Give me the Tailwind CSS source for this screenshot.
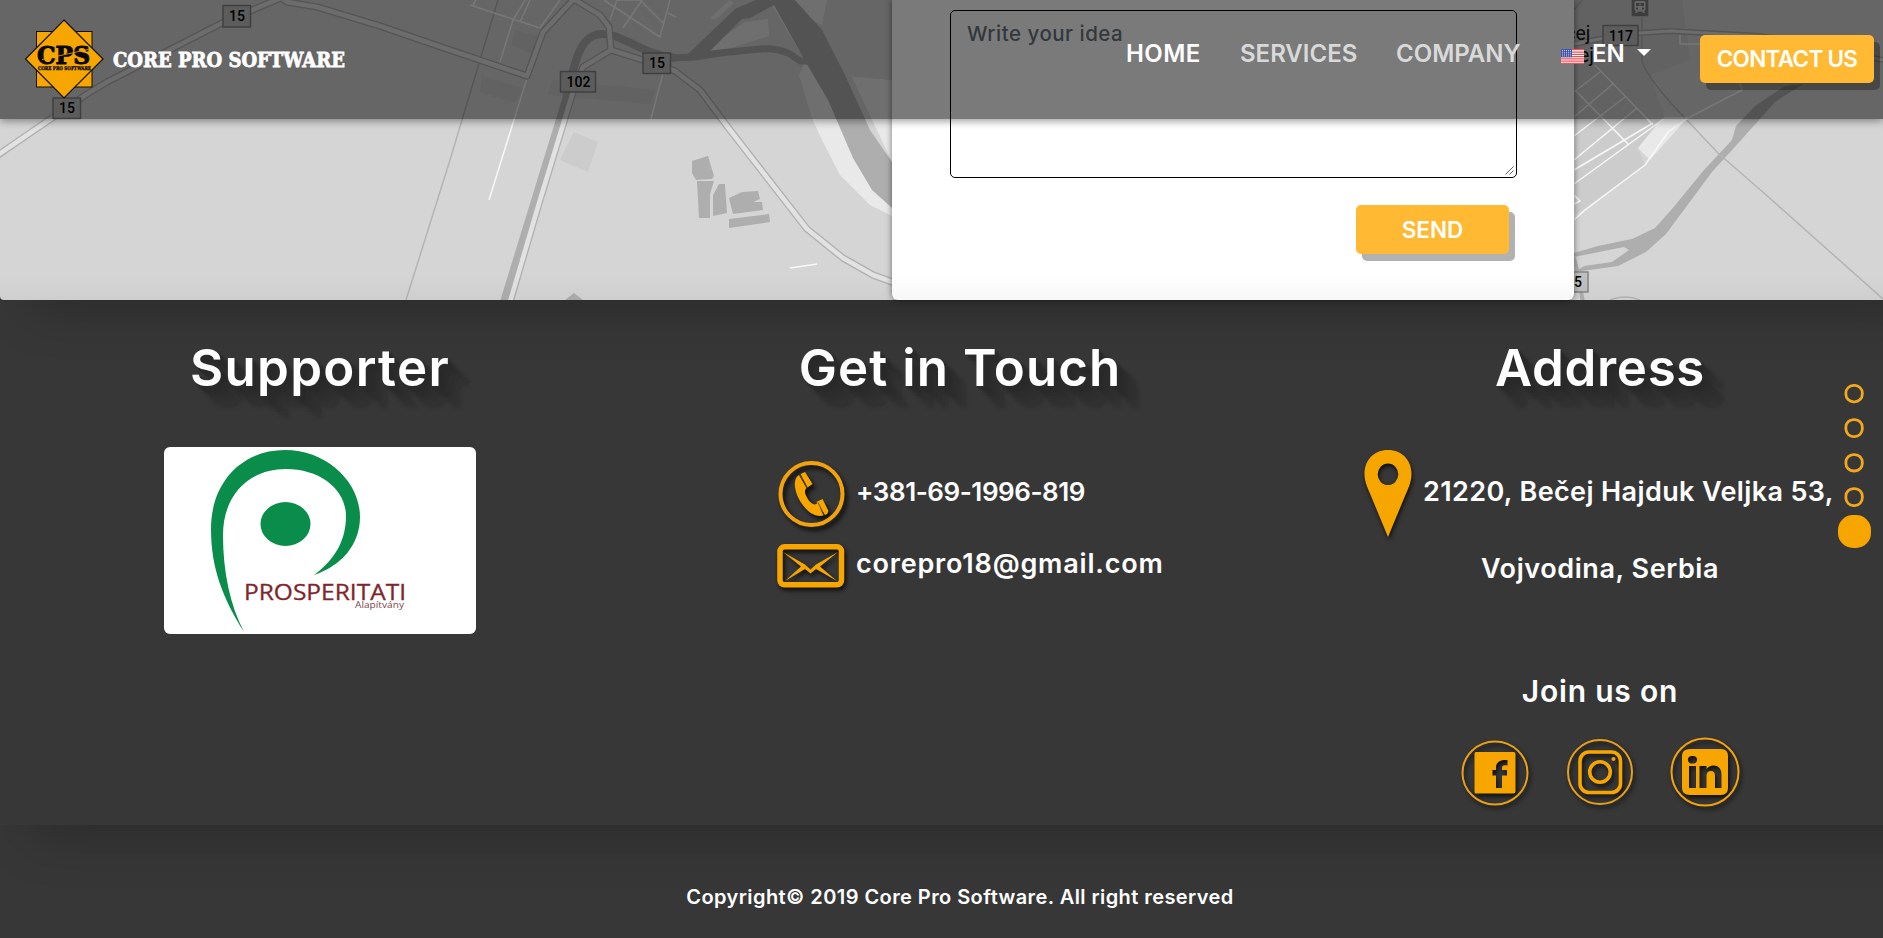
<!DOCTYPE html>
<html lang="en">
<head>
<meta charset="utf-8">
<title>Core Pro Software</title>
<script src="https://cdn.jsdelivr.net/npm/@tailwindcss/browser@4"></script>
</head>
<body class="h-[938px] overflow-hidden bg-[#373737] font-[Inter,sans-serif] font-semibold text-white">

<!-- Header over the map -->
<header class="absolute inset-x-0 top-0 z-20 flex h-[119px] items-start bg-black/52 pr-[9px] shadow-[0_2px_8px_rgba(0,0,0,0.4)]">
  <svg class="h-[119px] w-[360px]" viewBox="0 0 360 119">
    <rect x="36.5" y="31.5" width="55.5" height="55.5" fill="#f7a600" stroke="#111" stroke-width="1"/>
    <path d="M64 20 103 59 64 98 25.500 59Z" fill="#f7a600" stroke="#111" stroke-width="1.200"/>
    <text x="37" y="63.500" textLength="53" lengthAdjust="spacingAndGlyphs" font-family="DejaVu Serif" font-weight="700" font-size="24" fill="#080808" stroke="#080808" stroke-width="1">CPS</text>
    <path d="M42 59.500 88 49.500" stroke="#f7a600" stroke-width=".8"/>
    <text x="38" y="70" textLength="53" lengthAdjust="spacingAndGlyphs" font-family="DejaVu Serif" font-weight="700" font-size="5" fill="#080808" stroke="#080808" stroke-width=".3">CORE PRO SOFTWARE</text>
    <text x="113" y="67" textLength="232" lengthAdjust="spacingAndGlyphs" font-family="DejaVu Serif" font-weight="700" font-size="21" fill="#fff" stroke="#fff" stroke-width=".8">CORE PRO SOFTWARE</text>
  </svg>
  <nav class="ml-auto flex pt-[33px] text-[24px] leading-[41px] whitespace-nowrap text-[#d9d9d9]">
    <a class="w-[114px] tracking-[0.400px] text-white">HOME</a>
    <a class="w-[156px]">SERVICES</a>
    <a class="w-[165px]">COMPANY</a>
    <a class="flex w-[139px] text-white">
      <svg class="mt-[16px] mr-[8px] h-[15px] w-[23px]" viewBox="0 0 23 15">
        <path fill="#fff" d="M0 0h23v15H0z"/>
        <path stroke="#e8535a" stroke-width="1.250" d="M0 .7h23M0 3h23M0 5.300h23M0 7.600h23M0 9.900h23M0 12.200h23M0 14.400h23"/>
        <path fill="#4257a8" d="M0 0h11v8.300H0z"/>
        <path stroke="#d8def5" stroke-width=".8" stroke-dasharray="1 1" d="M1 1.500h9M1 3.300h9M1 5.100h9M1 6.900h9"/>
      </svg>
      EN
      <svg class="mt-[16px] ml-[12px] h-[7px] w-[14px]" viewBox="0 0 14 7"><path fill="#fff" d="M0 0h14L7 7z"/></svg>
    </a>
  </nav>
  <a class="mt-[35px] flex h-[48px] w-[174px] items-center justify-center rounded-[5px] bg-[#ffb932] text-[22.500px] tracking-[-0.700px] whitespace-nowrap shadow-[6px_7px_0_rgba(0,0,0,0.3)]">CONTACT US</a>
</header>

<!-- Map with the contact form card -->
<section class="relative z-10 flex h-[300px] justify-center rounded-bl-[4px] bg-[#d5d5d5] shadow-[30px_10px_50px_rgba(0,0,0,0.23)]">
  <svg class="absolute inset-0 h-[300px] w-[1883px] rounded-bl-[4px]" viewBox="0 0 1883 300" fill="none" stroke-linejoin="round">
    <!-- blocks -->
    <path fill="#cccccc" d="M574 132 598 142 588 172 560 160zM482 76 523 88 515 103 480 92zM552 80 655 90 650 104 548 95zM515 30 545 38 535 55 512 45zM1575 0H1682L1690 60 1650 75 1665 120 1638 148 1645 165 1575 215z"/>
    <path fill="#e9e9e9" d="M803 57 772 5 790 0H827L822 26 850 76 892 80V162L830 30 805 15zM812 118 799 75 805 62 850 118 875 165 892 200V216L870 205 840 175 822 140zM712 45 745 22 768 19 769 36 725 50 710 50zM710 18 730 0 734 3 715 20zM1638 148 1662 118 1688 117 1650 160z"/>
    <path fill="#d5d5d5" d="M827 0H892V80L850 76 822 26z"/>
    <!-- water -->
    <path stroke="#aeaeae" stroke-width="8" d="M504 302 566 100C575 60 580 34 602 34S640 54 675 58"/>
    <path stroke="#aeaeae" stroke-width="7" d="M670 58 695 57 720 53 750 50Q775 46 790 54L800 61H812"/>
    <path fill="#aeaeae" d="M770-2H793L822 30 845 75 870 130 892 162V208L872 190 853 158 828 100 808 66 803 57zM678 54 688 54 735 9 765-4 776 4 750 18 742 19 703 58 688 61z"/>
    <path fill="#aeaeae" d="M692 161 708 156 714 176 712 179 696 180 692 173zM697 181 714 181 710 194 710 218 699 218zM719 184 725 184 727 213 713 216 713 195zM729 198 742 192 758 191 760 199 753 202 762 202 763 210 733 214zM729 219 769 214 770 222 729 228zM565 300 574 293 583 300z"/>
    <path fill="#aeaeae" d="M1574 253 1598 246 1632 239 1655 228 1672 209 1704 170 1732 140 1736 126 1755 106 1785 86 1803 84 1775 102 1742 139 1712 172 1666 234 1646 252 1618 266 1575 272 1584 266 1612 262 1629 250 1624 247 1574 257z"/>
    <!-- rail and field lines -->
    <path stroke="#b4b4b4" stroke-width="1.500" d="M406 300 450 160 498 0M1642 0V58Q1642 65 1646 70 1656 88 1684 117L1718 153 1765 194 1883 299M1610 300Q1625 294 1640 300M1574 10 1582 0"/>
    <path stroke="#f8f8f8" stroke-width="1.500" d="M489 200 527 78M500 62 513 20 525 0M470 5 540 28 560 0M473 5 476 0M520 22 530 0M604 0 660 37 670 0M640 0 663 23M610 20 617 0 642 0 623 28M668 13 676 17M651 119 663 73M790 268 817 264M1574 220 1585 210 1645 165 1669 131 1690 117 1742 90 1738 80M1574 184 1665 118 1688 118M1574 170 1653 123M1574 160 1637 108M1574 136 1625 97M1574 117 1614 83M1574 92 1600 72M1575 90 1628 144M1595 65 1653 125M1574 195 1580 201 1574 204M1680 35V44H1702"/>
    <!-- roads: casing and fill -->
    <g stroke="#b0b0b0" stroke-width="7.200">
      <path d="M-5 157 52 118 87 94 107 82 222 23 283-3M280-3 287 2 317 7 380 26 450 50 527 76 543 32 573 0M572-2 600 15 609 27 611 50 643 60 675 71 700 90 730 130 807 229 843 258 873 275 895 283M611 50 583 67 573 92 540 200 510 302"/>
      <path d="M1574 44 1605 38 1640 33 1670 31 1760 36 1883 60" stroke-width="6"/>
      <path d="M1574 258 1577 270 1583 302" stroke-width="4"/>
    </g>
    <g stroke="#e2e2e2" stroke-width="4.600">
      <path d="M-5 157 52 118 87 94 107 82 222 23 283-3M280-3 287 2 317 7 380 26 450 50 527 76 543 32 573 0M572-2 600 15 609 27 611 50 643 60 675 71 700 90 730 130 807 229 843 258 873 275 895 283M611 50 583 67 573 92 540 200 510 302"/>
      <path d="M1574 44 1605 38 1640 33 1670 31 1760 36 1883 60" stroke-width="3"/>
    </g>
    <!-- road numbers -->
    <g fill="#c0c0c0" stroke="#858585" stroke-width="1.500">
      <path d="M223 5.500h27.500v21.500H223zM53 98h27.500v20.500H53zM560.500 71.500h35v20.500h-35zM643 53h27.500v20.500H643zM1603 25.500h35v20h-35zM1560 272h28v20h-28z"/>
    </g>
    <rect x="1631.500" y="-4" width="17" height="20.500" rx="1.500" fill="#7e7e7e" stroke="#b8b8b8"/>
    <path fill="#d5d5d5" fill-rule="evenodd" d="M1636 1h8q1.500 0 1.500 1.500v7.500l-1.500 1 1 2h-2l-1-1.500h-4l-1 1.500h-2l1-2-1.500-1V2.500Q1634.500 1 1636 1zM1636 3v3h3.500V3zM1640.500 3v3h3.500V3zM1636 7.500v2h2v-2zM1642 7.500v2h2v-2z"/>
    <g fill="#000" font-family="Roboto" font-size="14" font-weight="500" text-anchor="middle">
      <text x="237" y="20.500">15</text><text x="67" y="113">15</text><text x="578.500" y="86.500">102</text><text x="657" y="68">15</text><text x="1621" y="40.500">117</text><text x="1578" y="286.500">5</text>
    </g>
    <g fill="#111" font-family="Roboto" font-size="19.500" font-weight="400" text-anchor="end">
      <text x="1590.500" y="39.500">čej</text><text x="1594" y="61.500">ej</text>
    </g>
  </svg>

  <form class="relative ml-[583px] h-[300px] w-[682px] rounded-b-[6px] bg-white pt-[10px] pl-[58px] shadow-[0_0_6px_rgba(0,0,0,0.5)]">
    <div class="relative h-[168px] w-[567px] rounded-[5px] border border-black px-[16px] pt-[8px] text-[20.500px] leading-[30px] font-medium tracking-[0.500px] text-[#6c757d]">Write your idea
      <svg class="absolute right-[2px] bottom-[2px] h-[9px] w-[9px]" viewBox="0 0 9 9"><path stroke="#555" stroke-width=".9" d="M.5 8.500 8.500.5M4.500 8.500l4-4"/></svg>
    </div>
    <div class="mt-[27px] ml-[406px] flex h-[49px] w-[153px] items-center justify-center rounded-[5px] bg-[#ffb932] text-[22.500px] tracking-[0px] shadow-[6px_7px_0_rgba(0,0,0,0.3)]">SEND</div>
  </form>
  <div class="absolute inset-x-0 bottom-0 h-[25px] bg-linear-to-b from-transparent to-black/3"></div>
</section>

<!-- Footer -->
<footer class="w-[1920px]">
  <div class="relative grid h-[525px] grid-cols-3 bg-[#373737] shadow-[30px_10px_50px_rgba(0,0,0,0.23)]">
    <div class="flex flex-col items-center pt-[38px]">
      <h2 class="text-[51px] leading-[59px] tracking-[1.300px] [text-shadow:2px_2px_2px_#2a2a2a,4px_4px_2px_#2a2a2a,7px_7px_3px_#2b2b2b,10px_10px_3px_#2d2d2d,13px_13px_3px_#2f2f2f,16px_16px_3px_#303030,19px_19px_3px_#323232,22px_22px_3px_#323232]">Supporter</h2>
      <svg class="mt-[50px] h-[187px] w-[312px] rounded-[6px] bg-white" viewBox="0 0 312 187">
        <g fill="#0a8c4a">
          <path d="M80 185C58 150 47 120 47 82C47 35 78 3 121 3C163 3 196 35 196 70C196 98 177 119 150 128C172 112 182 92 182 69C182 43 157 22 122 22C85 22 59 48 59 88C59 125 66 158 80 185Z"/>
          <ellipse cx="121.500" cy="77" rx="25" ry="22"/>
        </g>
        <text x="80" y="153" textLength="162" lengthAdjust="spacingAndGlyphs" font-family="Open Sans" font-weight="400" font-size="21" fill="#80252d" stroke="#80252d" stroke-width=".3">PROSPERITATI</text>
        <text x="191" y="161" textLength="49" lengthAdjust="spacingAndGlyphs" font-family="Open Sans" font-weight="400" font-size="9" fill="#80454b">Alapítvány</text>
      </svg>
    </div>

    <div class="pt-[38px]">
      <h2 class="text-center text-[51px] leading-[59px] tracking-[1.100px] [text-shadow:2px_2px_2px_#2a2a2a,4px_4px_2px_#2a2a2a,7px_7px_3px_#2b2b2b,10px_10px_3px_#2d2d2d,13px_13px_3px_#2f2f2f,16px_16px_3px_#303030,19px_19px_3px_#323232,22px_22px_3px_#323232]">Get in Touch</h2>
      <div class="mt-[64px] flex items-center gap-[12px] pl-[137px]">
        <svg class="h-[66px] w-[67px] overflow-visible drop-shadow-[3px_4px_2px_rgba(0,0,0,0.75)]" viewBox="0 0 67 66">
          <circle cx="34.500" cy="33" r="31" fill="none" stroke="#f2a20c" stroke-width="4"/>
          <g fill="#f7a600">
            <path d="M23.500 13 28 11 35.500 23 30.500 26.500z"/>
            <path d="M22 14 29.500 27C27.500 29 27.500 32 29.500 35.500C31.500 39.500 34 43 38 43.500L41 42 46.500 54.500C39 56.500 32 52 26.500 45C21 37.500 17 28.500 18 21Q18.500 16 22 14z"/>
            <path d="M39.500 41 45.500 38 51.500 50Q51 53 48 54z"/>
          </g>
          <path d="M22.500 13.500 30.500 27M41 41.500 47.500 54.500" stroke="#5a400a" stroke-width=".8"/>
        </svg>
        <span class="pb-[5px] text-[26px] leading-[40px] tracking-[-0.450px]">+381-69-1996-819</span>
      </div>
      <div class="mt-[17px] flex items-center gap-[12px] pl-[137px]">
        <svg class="h-[44px] w-[67px] overflow-visible drop-shadow-[2px_3px_2px_rgba(0,0,0,0.75)]" viewBox="0 0 67 44">
          <rect x="3" y="2.800" width="61.500" height="38" rx="4.500" fill="none" stroke="#f7a600" stroke-width="5.500"/>
          <path fill="#f7a600" d="M6 8 28 20.500 33.500 25.500 39 20.500 61 8 43 22.500 60 37 39 25 33.500 29.500 28 25 8 37 24 22.500z"/>
        </svg>
        <span class="pb-[5px] text-[27px] leading-[34px] tracking-[0.800px]">corepro18@gmail.com</span>
      </div>
    </div>

    <div class="flex flex-col items-center pt-[38px]">
      <h2 class="text-[51px] leading-[59px] tracking-[0.700px] [text-shadow:2px_2px_2px_#2a2a2a,4px_4px_2px_#2a2a2a,7px_7px_3px_#2b2b2b,10px_10px_3px_#2d2d2d,13px_13px_3px_#2f2f2f,16px_16px_3px_#303030,19px_19px_3px_#323232,22px_22px_3px_#323232]">Address</h2>
      <div class="mt-[53px] flex h-[88px] items-center gap-[11px] self-start pl-[84px] whitespace-nowrap">
        <svg class="h-[88px] w-[48px] overflow-visible drop-shadow-[1px_3px_2px_rgba(0,0,0,0.7)]" viewBox="0 0 48 88">
          <path fill="#f7a600" fill-rule="evenodd" d="M24 0C38 0 47.500 10 47.500 24C47.500 32 44 39 41 46L24 87 7 46C4 39 .5 32 .5 24C.5 10 10 0 24 0ZM24 13.500A10.300 10.800 0 1 0 24 35.100A10.300 10.800 0 1 0 24 13.500Z"/>
        </svg>
        <span class="pb-[5px] text-[27px] leading-[40px] tracking-[0.380px]">21220, Bečej Hajduk Veljka 53,</span>
      </div>
      <p class="mt-[11px] text-[27px] leading-[40px] tracking-[0.580px]">Vojvodina, Serbia</p>
      <p class="mt-[82px] text-[30px] leading-[40px] tracking-[0.800px]">Join us on</p>
      <div class="mt-[27px] flex gap-[35px]">
        <svg class="h-[70px] w-[70px] overflow-visible drop-shadow-[2px_3px_2px_rgba(0,0,0,0.7)]" viewBox="0 0 70 70">
          <ellipse cx="35" cy="35" rx="32.500" ry="31.500" fill="none" stroke="#e8a017" stroke-width="2"/>
          <path fill="#f7a600" fill-rule="evenodd" d="M16 14H53.500Q55.500 14 55.500 16V53.500Q55.500 55.500 53.500 55.500H16Q14.500 55.500 14.500 53.500V16Q14.500 14 16 14ZM47.500 22C40 21.500 36 24 36 29.500V32H32.500V37.500H36V50H42V37.500H47V32H42V30C42 27.500 44 27 47.500 27.500Z"/>
        </svg>
        <svg class="h-[70px] w-[70px] overflow-visible drop-shadow-[2px_3px_2px_rgba(0,0,0,0.7)]" viewBox="0 0 70 70" fill="none">
          <ellipse cx="35" cy="34" rx="32" ry="32" stroke="#e8a017" stroke-width="2"/>
          <rect x="15" y="14" width="40.500" height="40.500" rx="9" stroke="#f7a600" stroke-width="3.600"/>
          <circle cx="35" cy="34" r="10.300" stroke="#f7a600" stroke-width="3.600"/>
          <circle cx="48.500" cy="21" r="2" fill="#f7a600"/>
        </svg>
        <svg class="h-[70px] w-[70px] overflow-visible drop-shadow-[2px_3px_2px_rgba(0,0,0,0.7)]" viewBox="0 0 70 70">
          <circle cx="35" cy="34" r="33.500" fill="none" stroke="#f2a20c" stroke-width="2"/>
          <path fill="#f7a600" fill-rule="evenodd" d="M20 11H51Q58 11 58 18V50Q58 57 51 57H20Q12 57 12 50V18Q12 11 20 11ZM22.500 18A4 3.800 0 1 0 22.500 25.500A4 3.800 0 1 0 22.500 18ZM19 28V50H26V28ZM29.500 28V50H36.500V38Q36.500 33 41 33Q45 33 45 38V50H51.500V37Q51.500 27.500 43.500 27.500Q39 27.500 36.500 31V28Z"/>
        </svg>
      </div>
    </div>
  </div>
  <p class="relative pt-[57px] text-center text-[20px] leading-[30px] tracking-[0.430px]">Copyright© 2019 Core Pro Software. All right reserved</p>
</footer>

<!-- Page position dots -->
<aside class="absolute top-[384px] left-[1838px] z-20 flex w-[33px] flex-col items-center">
  <svg class="h-[165px] w-[33px]" viewBox="0 0 33 165" fill="none" stroke="#f2a81c" stroke-width="2.800">
    <rect x="7.900" y="1.400" width="16.400" height="16.400" rx="7.600"/>
    <rect x="7.900" y="35.600" width="16.400" height="17" rx="7.600"/>
    <rect x="7.900" y="70.600" width="16.400" height="16.400" rx="7.600"/>
    <rect x="7.900" y="104.600" width="16.400" height="17" rx="7.600"/>
    <rect x="0" y="131" width="33" height="33" rx="15" fill="#f7a600" stroke="none"/>
  </svg>
</aside>
</body>
</html>
